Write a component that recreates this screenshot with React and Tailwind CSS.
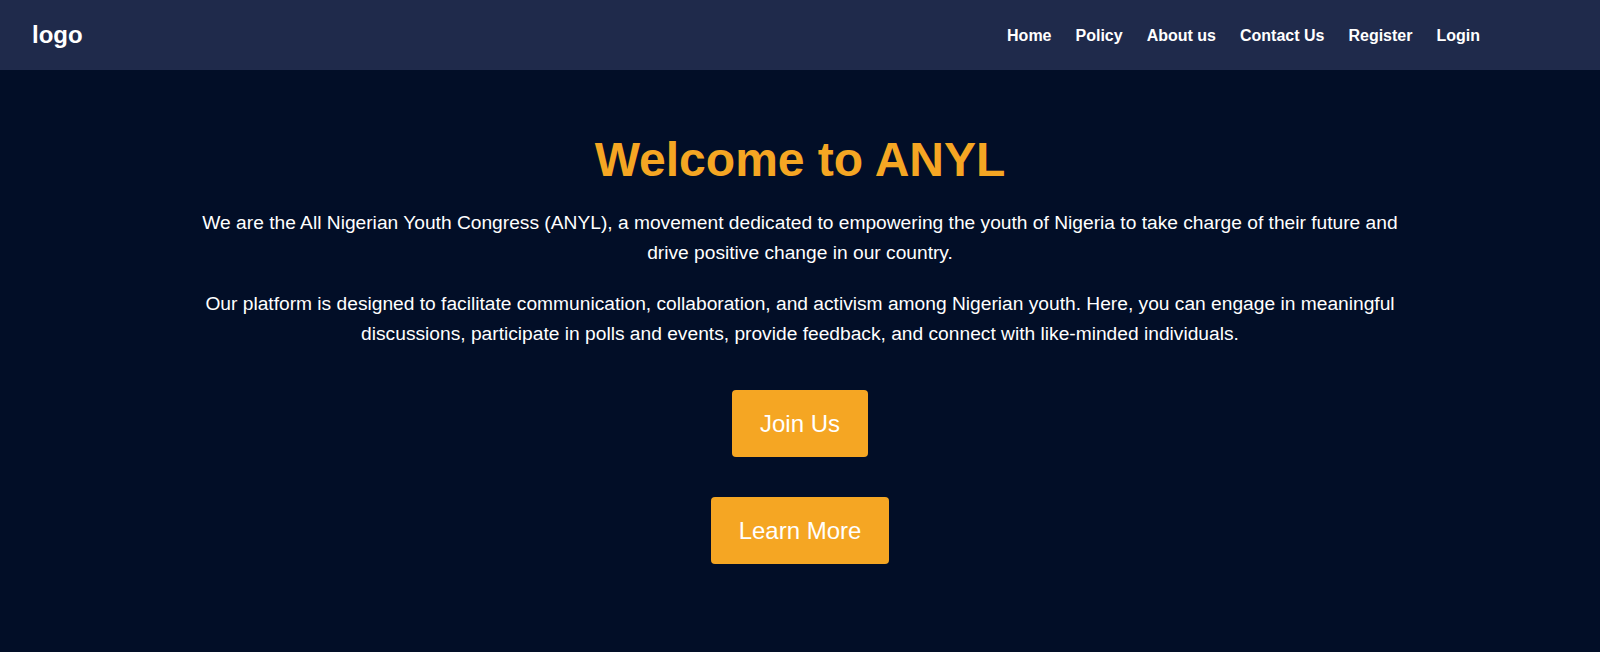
export default function App() {
  const links = ["Home", "Policy", "About us", "Contact Us", "Register", "Login"];

  return (
    <div className="min-h-screen bg-[#020e27] text-white font-['Liberation_Sans',Arial,sans-serif]">
      {/* Header */}
      <header className="h-[70px] bg-[#1f2a4b] flex items-center justify-between pl-8 pr-[120px]">
        <div className="text-2xl font-bold">logo</div>
        <nav className="flex items-center gap-6 mt-[2px]">
          {links.map((link) => (
            <a key={link} href="#" className="text-base font-bold text-white">
              {link}
            </a>
          ))}
        </nav>
      </header>

      {/* Hero */}
      <main className="flex flex-col items-center pt-[63px] pb-16 text-center">
        <h1 className="text-[48px] leading-[1.117] font-bold text-[#f5a623] mb-[21px]">
          Welcome to ANYL
        </h1>
        <div className="max-w-[1220px]">
          <p className="text-[19.2px] leading-[30px] mb-[21px]">
            We are the All Nigerian Youth Congress (ANYL), a movement dedicated to empowering the youth of Nigeria to take charge of their future and drive positive change in our country.
          </p>
          <p className="text-[19.2px] leading-[30px]">
            Our platform is designed to facilitate communication, collaboration, and activism among Nigerian youth. Here, you can engage in meaningful discussions, participate in polls and events, provide feedback, and connect with like-minded individuals.
          </p>
        </div>

        <div className="flex flex-col items-center gap-10 mt-[41px]">
          <button className="bg-[#f5a623] text-white text-2xl leading-[27px] px-7 py-5 rounded">
            Join Us
          </button>
          <button className="bg-[#f5a623] text-white text-2xl leading-[27px] px-7 py-5 rounded">
            Learn More
          </button>
        </div>
      </main>
    </div>
  );
}
